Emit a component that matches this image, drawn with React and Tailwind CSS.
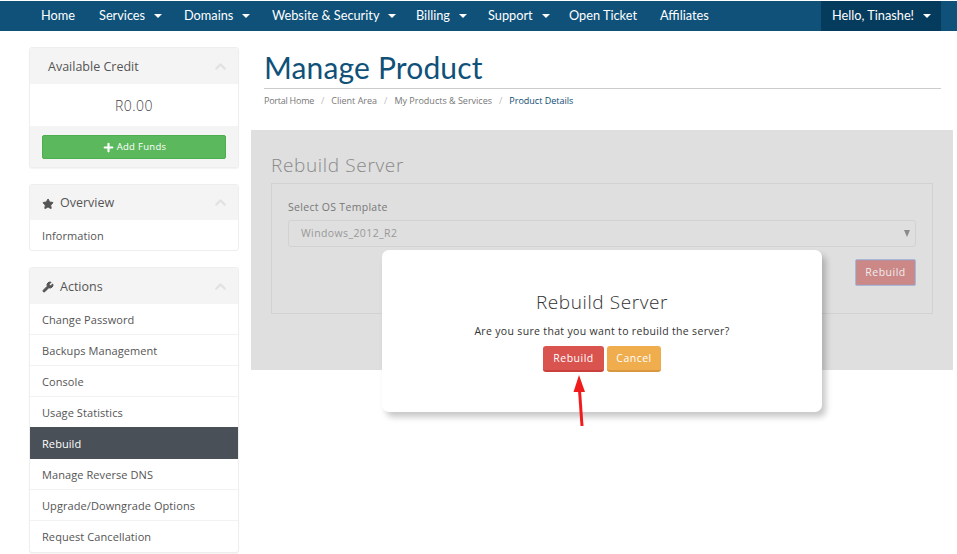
import { ChevronUp, Plus, Star, Wrench } from 'lucide-react'

const navItems = [
  { label: 'Home', w: 'w-[58px]' },
  { label: 'Services', caret: true, w: 'w-[85px]' },
  { label: 'Domains', caret: true, w: 'w-[88px]' },
  { label: 'Website & Security', caret: true, w: 'w-[144px]' },
  { label: 'Billing', caret: true, w: 'w-[72px]' },
  { label: 'Support', caret: true, w: 'w-[81px]' },
  { label: 'Open Ticket', w: 'w-[91px]' },
  { label: 'Affiliates', w: 'w-[80px]' },
]

const actions = ['Change Password', 'Backups Management', 'Console', 'Usage Statistics', 'Rebuild', 'Manage Reverse DNS', 'Upgrade/Downgrade Options', 'Request Cancellation']

const Caret = () => (
  <span className="ml-[9px] inline-block h-0 w-0 border-x-[4px] border-t-[4px] border-x-transparent border-t-white align-middle" />
)

const PanelHead = ({ icon, title, h }) => (
  <div className={`flex items-center justify-between bg-[#f4f4f4] pl-[12px] pr-[9px] ${h}`}>
    <div className="flex items-center gap-[6px] pt-[2px] text-[12.5px] text-[#555]">
      {icon}
      <span>{title}</span>
    </div>
    <ChevronUp size={17} strokeWidth={3} className="text-[#e2e2e2]" />
  </div>
)

const App = () => {
  return (
    <div className="relative h-[554px] w-[957px] overflow-hidden bg-white font-['Open_Sans',sans-serif]">
      <div className="mt-px flex h-[30px] items-stretch bg-[#0f5179] pl-[41px] pr-[16px] font-['Lato',sans-serif] text-[12.75px] text-white">
        {navItems.map(item => (
          <div key={item.label} className={`flex items-center whitespace-nowrap ${item.w}`}>
            {item.label}
            {item.caret && <Caret />}
          </div>
        ))}
        <div className="ml-auto flex w-[120px] items-center justify-center whitespace-nowrap bg-[#053c5e] pl-px">
          Hello, Tinashe!
          <Caret />
        </div>
      </div>

      <div className="flex">
        <aside className="ml-[29px] mt-4 flex w-[210px] shrink-0 flex-col gap-4">
          <div className="overflow-hidden rounded-[3px] border border-[#eee] bg-white shadow-[0_1px_1px_rgba(0,0,0,0.05)]">
            <div className="flex h-[36px] items-center justify-between bg-[#f4f4f4] pl-[18px] pr-[9px] text-[12.5px] text-[#555]">
              <span className="pt-[2px]">Available Credit</span>
              <ChevronUp size={17} strokeWidth={3} className="text-[#e2e2e2]" />
            </div>
            <div className="flex h-[42px] items-center justify-center text-[14px] font-light tracking-[0.5px] text-[#444]">R0.00</div>
            <div className="bg-[#f4f4f4] px-[12px] pb-[8px] pt-[9px]">
              <div className="flex h-[24px] items-center justify-center gap-[2px] rounded-[2px] border border-[#4cae4c] bg-[#5cb85c] text-[9.5px] tracking-[0.3px] text-white">
                <Plus size={13} strokeWidth={4} />
                Add Funds
              </div>
            </div>
          </div>

          <div className="overflow-hidden rounded-[3px] border border-[#eee] bg-white">
            <PanelHead h="h-[35px]" title="Overview" icon={<Star size={12} fill="#555" className="text-[#555]" />} />
            <div className="flex h-[30px] items-center px-[12px] pt-[2px] text-[11px] tracking-[0.08px] text-[#555]">Information</div>
          </div>

          <div className="overflow-hidden rounded-[3px] border border-[#eee] bg-white shadow-[0_1px_1px_rgba(0,0,0,0.05)]">
            <PanelHead h="h-[36px]" title="Actions" icon={<Wrench size={12} fill="#555" className="text-[#555]" />} />
            {actions.map(label => (
              <div
                key={label}
                className={`flex items-center border-b border-[#f2f2f2] px-[12px] text-[11px] tracking-[0.08px] last:border-b-0 ${label === 'Rebuild' ? '-mt-px h-[32px] border-b-0 bg-[#495057] pt-[3px] text-white' : 'h-[31px] pt-[2px] text-[#555]'}`}
              >
                {label}
              </div>
            ))}
          </div>
        </aside>

        <main className="ml-[12px] w-[702px] shrink-0">
          <div className="pl-[13px] pr-[12px]">
            <h1 className="h-[58px] border-b border-[#ccc] pt-[17px] font-['Lato',sans-serif] text-[30px] leading-[38px] tracking-[0.15px] text-[#0f5179]">Manage Product</h1>
            <div className="mt-[6px] flex h-[12px] items-center whitespace-nowrap text-[9px] text-[#777]">
              <span className="tracking-[-0.25px]">Portal Home</span>
              <span className="mx-[7px] text-[#bbb]">/</span>
              <span>Client Area</span>
              <span className="mx-[7px] text-[#bbb]">/</span>
              <span>My Products &amp; Services</span>
              <span className="mx-[7px] text-[#bbb]">/</span>
              <span className="text-[#0f4c72]">Product Details</span>
            </div>
          </div>

          <div className="mt-[23px] h-[240px] bg-[#dfdfdf] px-[20px] pt-[22px]">
            <h2 className="h-[31px] text-[19px] font-light leading-[27px] tracking-[0.65px] text-[#8a8a8a]">Rebuild Server</h2>
            <div className="h-[131px] w-[662px] border border-[#d2d2d2] px-[16px] pt-[16px]">
              <div className="h-[20px] text-[10.5px] leading-[15px] tracking-[0.3px] text-[#777]">Select OS Template</div>
              <div className="flex h-[27px] items-center justify-between rounded-[3px] border border-[#d2d2d2] pl-[12px] pr-[5px] text-[10.5px] tracking-[0.4px] text-[#999]">
                <span>Windows_2012_R2</span>
                <span className="h-0 w-0 border-x-[3.5px] border-t-[7px] border-x-transparent border-t-[#8a8a8a]" />
              </div>
              <div className="mt-[12px] flex justify-end">
                <div className="flex h-[27px] w-[61px] items-center justify-center rounded-[2px] border border-[#a8b8d6] bg-[#cc8787] text-[10.5px] tracking-[0.5px] text-[#eee] shadow-[inset_0_0_0_1px_rgba(170,150,170,0.5)]">Rebuild</div>
              </div>
            </div>
          </div>
        </main>
      </div>

      <div className="absolute left-[382px] top-[250px] flex h-[162px] w-[440px] flex-col items-center rounded-[7px] bg-white pt-[40px] shadow-[4px_5px_6px_rgba(0,0,0,0.22)]">
        <h2 className="h-[33px] text-[19px] font-light leading-[24px] tracking-[0.6px] text-[#333]">Rebuild Server</h2>
        <p className="h-[23px] text-[10.5px] leading-[16px] tracking-[0.33px] text-[#333]">Are you sure that you want to rebuild the server?</p>
        <div className="flex gap-[3px]">
          <div className="flex h-[26px] w-[61px] items-center justify-center rounded-[3px] border-b-2 border-[#c9403c] bg-[#d9534f] pt-[2px] text-[10.5px] tracking-[0.5px] text-white">Rebuild</div>
          <div className="flex h-[26px] w-[54px] items-center justify-center rounded-[3px] border-b-2 border-[#d9983f] bg-[#f0ad4e] pt-[2px] text-[10.5px] tracking-[0.5px] text-white">Cancel</div>
        </div>
      </div>

      <svg className="absolute left-[570px] top-[372px]" width="22" height="58" viewBox="0 0 22 58">
        <path d="M12 54 L9.5 18" stroke="#f01c1c" strokeWidth="3" fill="none" />
        <path d="M9 3 L15 20 L3.5 20 Z" fill="#f01c1c" />
      </svg>
    </div>
  )
}

export default App
